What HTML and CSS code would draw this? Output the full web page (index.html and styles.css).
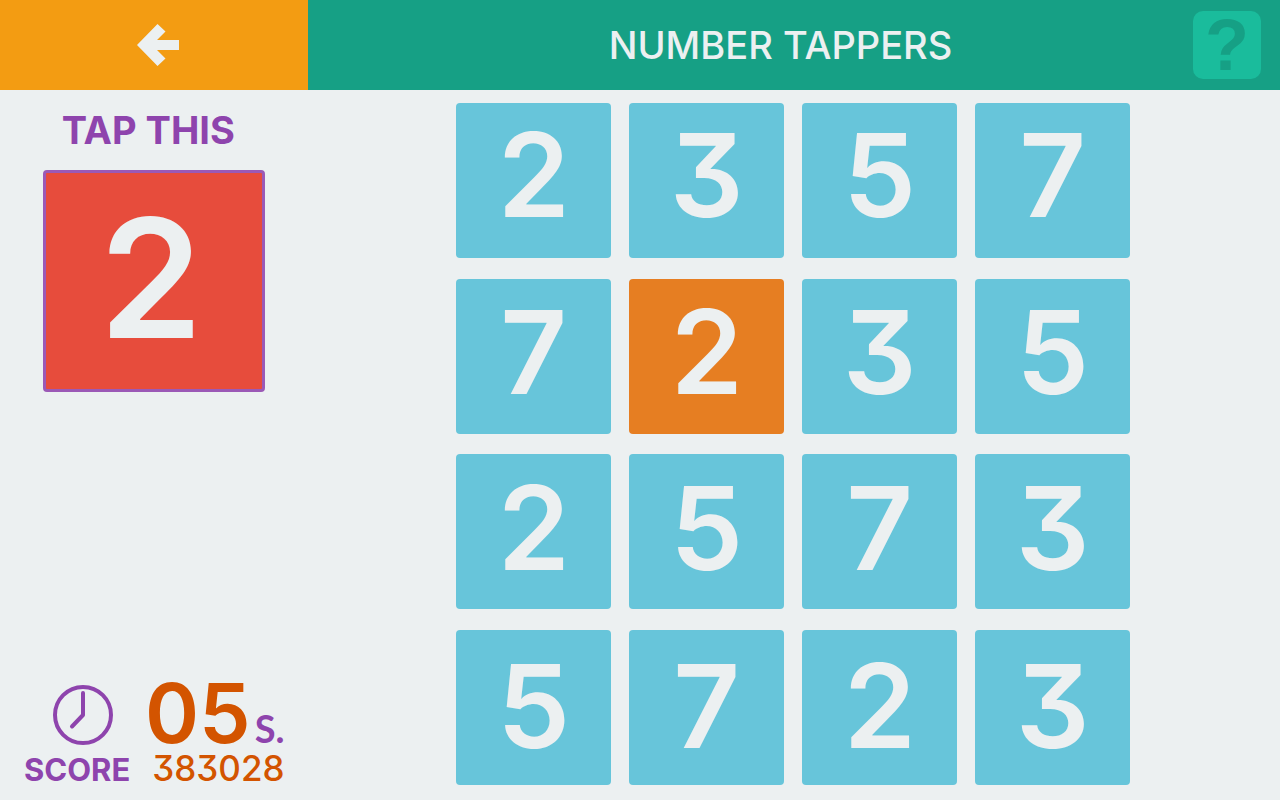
FILE: index.html
```html
<!DOCTYPE html>
<html lang="en">
<head>
  <meta charset="utf-8">
  <meta name="viewport" content="width=device-width, initial-scale=1">
  <title>Number Tappers</title>
  <link rel="stylesheet" href="styles.css">
</head>
<body>
  <header class="topbar">
    <button class="back" type="button" aria-label="Back">
      <svg class="back-icon" viewBox="0 0 42 42" aria-hidden="true"><path d="M0 21 L20.500 0 L28.500 7.500 L20 16 H42 V26 H20 L28.500 34.500 L20.500 42 Z"/></svg>
    </button>
    <h1 class="title">NUMBER TAPPERS</h1>
    <button class="help" type="button" aria-label="Help">?</button>
  </header>
  <main class="game">
    <aside class="side">
      <section class="target">
        <h2 class="target-label">TAP THIS</h2>
        <div class="target-tile">2</div>
      </section>
      <section class="stats">
        <div class="timer">
          <svg class="clock" viewBox="0 0 60 60" aria-hidden="true"><circle cx="30" cy="30" r="28"/><path d="M30 8 V30 L19 41.500"/></svg>
          <span class="seconds">05</span>
          <span class="unit">S.</span>
        </div>
        <div class="score">
          <span class="score-label">SCORE</span>
          <span class="score-value">383028</span>
        </div>
      </section>
    </aside>
    <section class="board" aria-label="Number tiles">
      <div class="row row-first">
        <button class="tile" type="button">2</button>
        <button class="tile" type="button">3</button>
        <button class="tile" type="button">5</button>
        <button class="tile" type="button">7</button>
      </div>
      <div class="row">
        <button class="tile" type="button">7</button>
        <button class="tile tile-active" type="button">2</button>
        <button class="tile" type="button">3</button>
        <button class="tile" type="button">5</button>
      </div>
      <div class="row">
        <button class="tile" type="button">2</button>
        <button class="tile" type="button">5</button>
        <button class="tile" type="button">7</button>
        <button class="tile" type="button">3</button>
      </div>
      <div class="row row-last">
        <button class="tile" type="button">5</button>
        <button class="tile" type="button">7</button>
        <button class="tile" type="button">2</button>
        <button class="tile" type="button">3</button>
      </div>
    </section>
  </main>
</body>
</html>
```
FILE: styles.css
```css
* { box-sizing: border-box; }

body {
  display: flex;
  flex-direction: column;
  min-height: 100vh;
  margin: 0;
  background: #ecf0f1;
  color: #8e44ad;
  font-family: Inter, "Liberation Sans", sans-serif;
  font-feature-settings: "cv09" 1;
}

button {
  margin: 0;
  padding: 0;
  border: 0;
  font-family: inherit;
  font-feature-settings: inherit;
  cursor: pointer;
}

h1, h2 { margin: 0; }

.topbar {
  display: flex;
  align-items: center;
  height: 90px;
  background: #16a085;
}

.back {
  display: flex;
  align-items: center;
  justify-content: center;
  flex: 0 0 308px;
  height: 100%;
  padding-left: 8px;
  background: #f39c12;
}

.back-icon {
  width: 42px;
  height: 42px;
  fill: #ecf0f1;
}

.title {
  flex: 1;
  padding-left: 60px;
  color: #ecf0f1;
  font-size: 38px;
  font-weight: 500;
  line-height: 44px;
  text-align: center;
}

.help {
  width: 68px;
  height: 68px;
  margin-right: 19px;
  border-radius: 10px;
  background: #1abc9c;
  color: #16a085;
  font-family: "Liberation Sans", sans-serif;
  font-size: 72px;
  font-weight: 700;
  line-height: 68px;
}

.game {
  display: flex;
  flex: 1;
}

.side {
  display: flex;
  flex-direction: column;
  justify-content: space-between;
  flex: 0 0 308px;
  padding: 18px 24px 10px 24px;
}

.target-label {
  padding-right: 12px;
  font-size: 38px;
  font-weight: 700;
  line-height: 44px;
  text-align: center;
}

.target-tile {
  display: flex;
  align-items: center;
  justify-content: center;
  width: 222px;
  height: 222px;
  margin: 18px 0 0 19px;
  padding: 0 6px 6px 0;
  border: 3px solid #9b59b6;
  border-radius: 4px;
  background: #e74c3c;
  color: #ecf0f1;
  font-size: 166px;
  font-weight: 600;
  line-height: 200px;
}

.timer {
  display: flex;
  align-items: baseline;
  padding-left: 29px;
}

.clock {
  align-self: center;
  width: 60px;
  height: 60px;
  margin-right: 32px;
  fill: none;
  stroke: #8e44ad;
  stroke-width: 4;
  stroke-linecap: round;
  stroke-linejoin: round;
}

.seconds {
  color: #d35400;
  font-size: 82px;
  font-weight: 600;
  line-height: 64px;
}

.unit {
  padding-left: 4px;
  font-family: Lato, sans-serif;
  font-size: 38px;
  font-weight: 700;
  line-height: 40px;
}

.score {
  display: flex;
  align-items: baseline;
  justify-content: space-between;
  line-height: 40px;
}

.score-label {
  font-size: 31px;
  font-weight: 700;
}

.score-value {
  color: #d35400;
  font-size: 35px;
  font-weight: 500;
}

.board {
  display: flex;
  flex: 1;
  flex-direction: column;
  align-items: center;
  justify-content: space-between;
  padding: 13px 2px 15px 0;
}

.row {
  display: flex;
  gap: 18px;
}

.tile {
  width: 155px;
  height: 155px;
  padding-bottom: 8px;
  border-radius: 4px;
  background: #67c5da;
  color: #ecf0f1;
  font-size: 116px;
  font-weight: 600;
  line-height: 140px;
}

.row-first .tile { padding-bottom: 12px; }

.row-last .tile { padding-bottom: 2px; }

.tile-active { background: #e67e22; }
```
